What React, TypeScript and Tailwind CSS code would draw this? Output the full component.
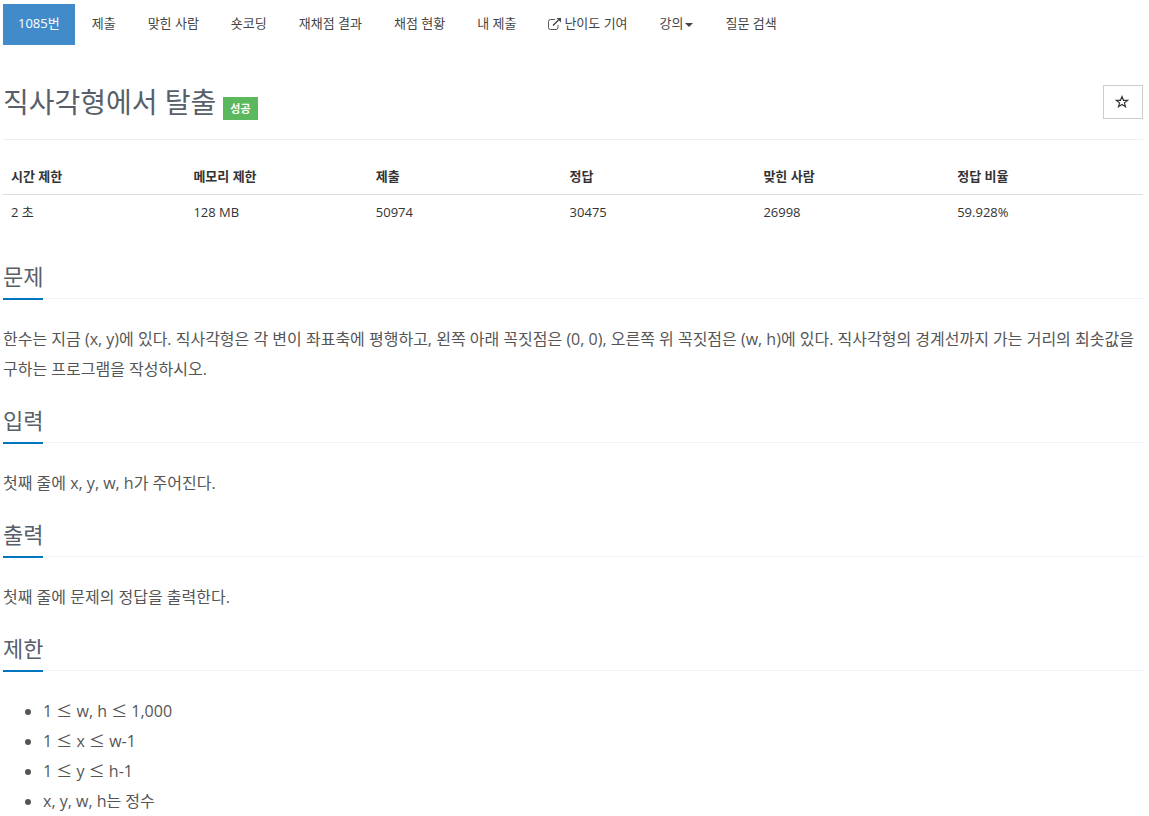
import type { ReactNode } from "react"

type MenuItem = {
  label: string
  active?: boolean
  external?: boolean
  dropdown?: boolean
}

const menu: MenuItem[] = [
  { label: "1085번", active: true },
  { label: "제출" },
  { label: "맞힌 사람" },
  { label: "숏코딩" },
  { label: "재채점 결과" },
  { label: "채점 현황" },
  { label: "내 제출" },
  { label: "난이도 기여", external: true },
  { label: "강의", dropdown: true },
  { label: "질문 검색" },
]

const info = [
  { name: "시간 제한", value: "2 초", width: "w-[16%]" },
  { name: "메모리 제한", value: "128 MB", width: "w-[16%]" },
  { name: "제출", value: "50974", width: "w-[17%]" },
  { name: "정답", value: "30475", width: "w-[17%]" },
  { name: "맞힌 사람", value: "26998", width: "w-[17%]" },
  { name: "정답 비율", value: "59.928%", width: "w-[17%]" },
]

const limits = ["1 ≤ w, h ≤ 1,000", "1 ≤ x ≤ w-1", "1 ≤ y ≤ h-1", "x, y, w, h는 정수"]

function ExternalIcon() {
  return (
    <svg width="13" height="12" viewBox="0 0 13 12" fill="none" className="mr-[3px]" aria-hidden="true">
      <path
        d="M7 1.5H2.5a2 2 0 0 0-2 2v6a2 2 0 0 0 2 2H8a2 2 0 0 0 2-2V7"
        stroke="currentColor"
        strokeWidth="0.9"
      />
      <path d="M5 7.5 10.5 2" stroke="currentColor" strokeWidth="1.5" />
      <path d="M8.5 0H13v4.5z" fill="currentColor" />
    </svg>
  )
}

function StarIcon() {
  return (
    <svg width="14" height="14" viewBox="0 0 14 14" fill="none" aria-hidden="true">
      <path
        d="m7 1.6 1.5 3.7 4.1.1-3.2 2.5 1.1 3.8L7 9.5l-3.5 2.2 1.1-3.8-3.2-2.5 4.1-.1z"
        stroke="currentColor"
        strokeWidth="1.2"
      />
    </svg>
  )
}

function Menu() {
  return (
    <nav>
      <ul className="flex flex-wrap gap-[2px]">
        {menu.map((item) => (
          <li key={item.label}>
            <a
              href="#"
              className={
                item.active
                  ? "flex items-center bg-[#428bca] px-[15px] pt-[9px] pb-[11px] text-white"
                  : "flex items-center px-[15px] pt-[9px] pb-[11px] text-[#444]"
              }
            >
              {item.external && <ExternalIcon />}
              {item.label}
              {item.dropdown && (
                <svg width="8" height="4" viewBox="0 0 8 4" className="mx-px mt-[2px]" aria-hidden="true">
                  <path d="M0 0h8L4 4z" fill="currentColor" />
                </svg>
              )}
            </a>
          </li>
        ))}
      </ul>
    </nav>
  )
}

// The sign comes from the Korean face, where it is wider
function Formula({ text }: { text: string }) {
  return text.split("≤").map((part, index) => (
    <span key={index}>
      {index > 0 && <span className="font-['Noto_Sans_CJK_KR',sans-serif] leading-none">≤</span>}
      {part}
    </span>
  ))
}

function Section({ title, children }: { title: string; children: ReactNode }) {
  return (
    <section className="mb-5">
      <div className="mb-[25px] flex border-b border-dotted border-[#e4e9f0]">
        <h2 className="-mb-[2px] border-b-2 border-[#0076c0] pb-[5px] text-[22px] leading-[33px] text-[#585f69]">
          {title}
        </h2>
      </div>
      <div className="text-[16px] leading-[30px] text-[#555]">{children}</div>
    </section>
  )
}

export default function App() {
  return (
    <main className="pt-1 pr-[6px] pl-[3px] font-['Open_Sans','Noto_Sans_CJK_KR',sans-serif] text-[13px] leading-[21px] text-[#333]">
      <Menu />

      <header className="mt-10 flex items-start justify-between border-b border-[#eee] pb-[19px]">
        <h1 className="flex items-end text-[28px] leading-[35px] text-[#585f69]">
          직사각형에서 탈출
          <span className="ml-[7px] bg-[#5cb85c] px-[7px] text-[11px] leading-[23px] font-bold text-white">성공</span>
        </h1>
        <button
          type="button"
          aria-label="즐겨찾기"
          className="flex h-[34px] w-10 items-center justify-center border border-[#ccc] pr-[2px] text-[#333]"
        >
          <StarIcon />
        </button>
      </header>

      <table className="mt-[19px] mb-[30px] w-full table-fixed text-left">
        <thead>
          <tr className="border-b border-[#ddd]">
            {info.map((col) => (
              <th key={col.name} className={`${col.width} px-2 py-[7px] font-bold`}>
                {col.name}
              </th>
            ))}
          </tr>
        </thead>
        <tbody>
          <tr>
            {info.map((col) => (
              <td key={col.name} className="px-2 py-[7px]">
                {col.value}
              </td>
            ))}
          </tr>
        </tbody>
      </table>

      <Section title="문제">
        <p>
          한수는 지금 (x, y)에 있다. 직사각형은 각 변이 좌표축에 평행하고, 왼쪽 아래 꼭짓점은 (0, 0), 오른쪽 위
          꼭짓점은 (w, h)에 있다. 직사각형의 경계선까지 가는 거리의 최솟값을 구하는 프로그램을 작성하시오.
        </p>
      </Section>

      <Section title="입력">
        <p>첫째 줄에 x, y, w, h가 주어진다.</p>
      </Section>

      <Section title="출력">
        <p>첫째 줄에 문제의 정답을 출력한다.</p>
      </Section>

      <Section title="제한">
        <ul className="list-disc pl-10">
          {limits.map((limit) => (
            <li key={limit}>
              <Formula text={limit} />
            </li>
          ))}
        </ul>
      </Section>
    </main>
  )
}
